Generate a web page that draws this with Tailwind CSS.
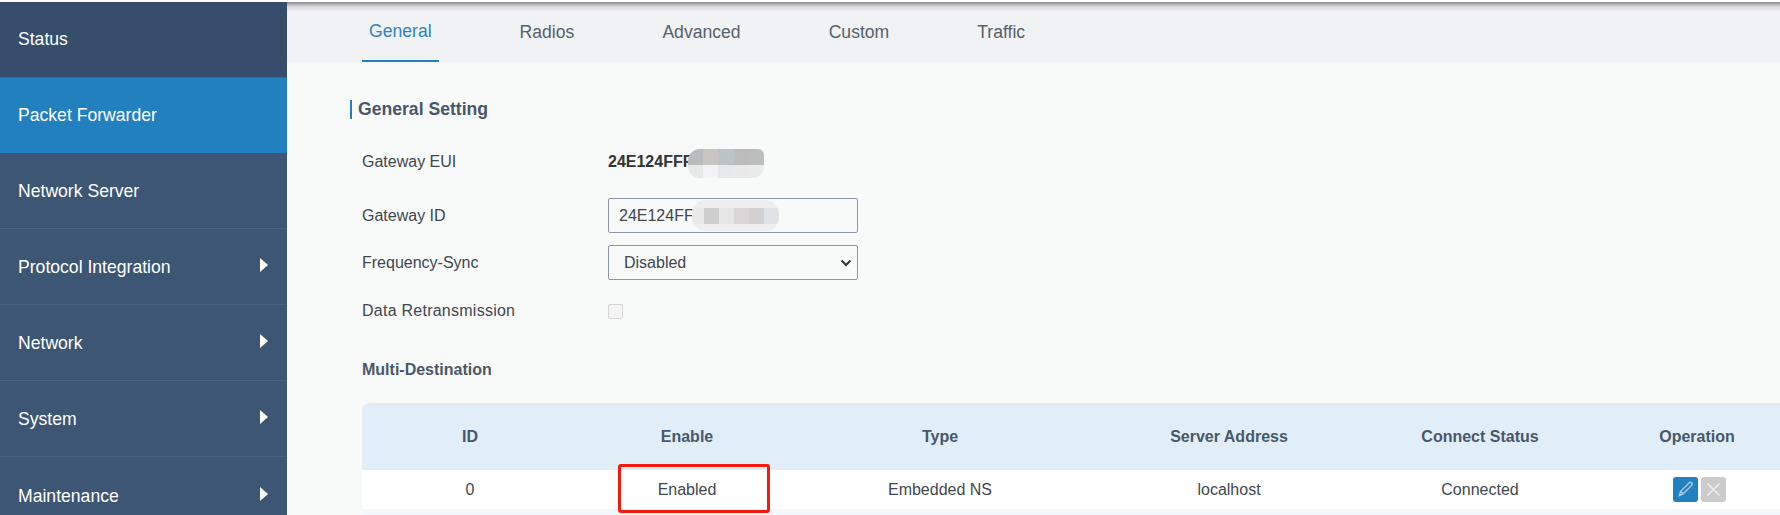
<!DOCTYPE html>
<html lang="en">
<head>
    <meta charset="UTF-8">
    <title>Packet Forwarder</title>
    <script src="https://cdn.jsdelivr.net/npm/@tailwindcss/browser@4"></script>
</head>
<body class="h-[515px] overflow-hidden bg-white font-['Liberation_Sans',Arial,sans-serif]">
    <div class="relative flex h-[515px] overflow-hidden pt-[2px]">
        <!-- Sidebar -->
        <nav class="w-[287px] shrink-0 bg-[#3c5674] text-[17.6px] text-white">
            <a class="flex h-[75px] items-center bg-[#364e6b] pl-[18px]">Status</a>
            <a class="flex h-[76px] items-center border-t border-[#2f6f9f] bg-[#2380bf] pl-[18px]">Packet Forwarder</a>
            <a class="flex h-[76px] items-center border-b border-[#4a637f] pl-[18px] pt-[2px]">Network Server</a>
            <a class="flex h-[76px] items-center justify-between border-b border-[#4a637f] pl-[18px] pr-[19px] pt-[2px]">Protocol Integration
                <svg class="mb-[5px] h-[14px] w-[8px]" viewBox="0 0 8 14"><path d="M0 0l8 7-8 7z" fill="#fff"/></svg>
            </a>
            <a class="flex h-[76px] items-center justify-between border-b border-[#4a637f] pl-[18px] pr-[19px] pt-[2px]">Network
                <svg class="mb-[5px] h-[14px] w-[8px]" viewBox="0 0 8 14"><path d="M0 0l8 7-8 7z" fill="#fff"/></svg>
            </a>
            <a class="flex h-[76px] items-center justify-between border-b border-[#4a637f] pl-[18px] pr-[19px] pt-[2px]">System
                <svg class="mb-[5px] h-[14px] w-[8px]" viewBox="0 0 8 14"><path d="M0 0l8 7-8 7z" fill="#fff"/></svg>
            </a>
            <a class="flex h-[76px] items-center justify-between pl-[18px] pr-[19px] pt-[2px]">Maintenance
                <svg class="mb-[5px] h-[14px] w-[8px]" viewBox="0 0 8 14"><path d="M0 0l8 7-8 7z" fill="#fff"/></svg>
            </a>
        </nav>

        <!-- Main -->
        <main class="relative min-w-0 flex-1 bg-[#f8f9f9] text-[16px] text-[#40474f]">
            <!-- top shadow -->
            <div class="absolute inset-x-0 top-0 h-[10px] bg-gradient-to-b from-[#8c8c8c] via-[#dcdcde] to-[#f1f2f4]"></div>

            <!-- Tabs -->
            <div class="flex h-[60px] items-stretch gap-[74px] bg-[#f1f2f4] pl-[75px] text-[17.6px] text-[#56616e]">
                <a class="flex items-center border-b-2 border-[#2380bf] px-[7px] text-[#2f83c0]">General</a>
                <a class="flex items-center px-[7px]">Radios</a>
                <a class="flex items-center px-[7px]">Advanced</a>
                <a class="flex items-center px-[7px]">Custom</a>
                <a class="flex items-center px-[7px]">Traffic</a>
            </div>

            <!-- General Setting -->
            <h2 class="ml-[63px] mt-[38px] border-l-2 border-[#2380bf] pl-[6px] text-[17.6px] leading-[19px] font-bold text-[#48586a]">General Setting</h2>

            <div class="ml-[75px] mt-[24px] flex h-[38px] items-center">
                <span class="w-[246px]">Gateway EUI</span>
                <span class="font-bold text-[#333]">24E124FFF</span>
            </div>
            <div class="ml-[75px] mt-[17px] flex h-[35px] items-center">
                <span class="w-[246px]">Gateway ID</span>
                <div class="flex h-[35px] w-[250px] items-center rounded-[2px] border border-[#8c96a3] pl-[10px]">24E124FF</div>
            </div>
            <div class="ml-[75px] mt-[12px] flex h-[35px] items-center">
                <span class="w-[246px]">Frequency-Sync</span>
                <div class="flex h-[35px] w-[250px] items-center justify-between rounded-[2px] border border-[#8c96a3] pl-[15px] pr-[5px]">Disabled
                    <svg class="h-[8px] w-[12px]" viewBox="0 0 12 8"><path d="M1.5 1.5L6 6l4.5-4.5" fill="none" stroke="#333" stroke-width="2"/></svg>
                </div>
            </div>
            <div class="ml-[75px] mt-[13px] flex h-[35px] items-center">
                <span class="w-[246px] tracking-[0.25px]">Data Retransmission</span>
                <div class="mt-[2px] h-[15px] w-[15px] rounded-[2px] border border-[#d4d4d4] bg-[#f4f4f4]"></div>
            </div>

            <h3 class="ml-[75px] mt-[33px] text-[16px] leading-[18px] font-bold text-[#48586a]">Multi-Destination</h3>

            <!-- Table -->
            <table class="ml-[75px] mt-[24px] w-[1446px] table-fixed text-center">
                <colgroup>
                    <col class="w-[216px]"><col class="w-[218px]"><col class="w-[288px]"><col class="w-[290px]"><col class="w-[212px]"><col class="w-[222px]">
                </colgroup>
                <thead>
                    <tr class="h-[67px] bg-[#e1eef8] font-bold text-[#48586a]">
                        <th class="rounded-tl-[8px]">ID</th><th>Enable</th><th>Type</th><th>Server Address</th><th>Connect Status</th><th>Operation</th>
                    </tr>
                </thead>
                <tbody>
                    <tr class="h-[39px] bg-white">
                        <td>0</td><td>Enabled</td><td>Embedded NS</td><td>localhost</td><td>Connected</td>
                        <td>
                            <div class="ml-[4px] flex justify-center gap-[3px]">
                                <span class="flex h-[25px] w-[25px] items-center justify-center rounded-[3px] bg-[#2380bf]">
                                    <svg class="h-[17px] w-[17px]" viewBox="0 0 17 17" fill="none" stroke="#a9cde8" stroke-width="1.4"><path d="M2.5 14.5l1-4L12 2c1-1 2-1 2.7-.2.8.8.7 1.8-.2 2.7L6 13l-3.5 1.5zM3.5 10.5l3 2.5"/></svg>
                                </span>
                                <span class="flex h-[25px] w-[25px] items-center justify-center rounded-[3px] bg-[#cbcbcb]">
                                    <svg class="h-[15px] w-[15px]" viewBox="0 0 15 15" stroke="#eee" stroke-width="1.6"><path d="M1.5 1.5l12 12M13.5 1.5l-12 12"/></svg>
                                </span>
                            </div>
                        </td>
                    </tr>
                    <tr class="h-[10px] bg-[#f3f8fc]"><td colspan="6"></td></tr>
                </tbody>
            </table>

            <!-- Mosaic over the Gateway EUI value -->
            <div class="absolute left-[401px] top-[147px] grid h-[29px] w-[76px] grid-cols-5 grid-rows-[16px_13px] overflow-hidden rounded-[12px] rounded-tr-[6px]">
                <div class="bg-[#b8bcbd]"></div><div class="bg-[#c8c6c2]"></div><div class="bg-[#bcc3c8]"></div><div class="bg-[#bcbcbc]"></div><div class="bg-[#bdbdbd]"></div>
                <div class="bg-[#e6e7e7]"></div><div class="bg-[#f3f3f3]"></div><div class="bg-[#e7e8ea]"></div><div class="bg-[#e9e9ea]"></div><div class="bg-[#e9eaea]"></div>
            </div>

            <!-- Mosaic over the Gateway ID value -->
            <div class="absolute left-[405px] top-[198px] flex h-[31px] w-[87px] items-center overflow-hidden rounded-[14px] bg-[#eeeeef]">
                <div class="h-[16px] w-[12px] bg-[#e9e9ea]"></div>
                <div class="h-[16px] w-[15px] bg-[#cfcecf]"></div>
                <div class="h-[16px] w-[15px] bg-[#e6e6e6]"></div>
                <div class="h-[16px] w-[15px] bg-[#d8d6d7]"></div>
                <div class="h-[16px] w-[15px] bg-[#d3d0d2]"></div>
                <div class="h-[16px] w-[15px] bg-[#e0e3e5]"></div>
            </div>

            <!-- Red annotation box -->
            <div class="absolute left-[331px] top-[462px] h-[49px] w-[152px] rounded-[3px] border-[3px] border-[#f5190f]"></div>
        </main>
    </div>
</body>
</html>
